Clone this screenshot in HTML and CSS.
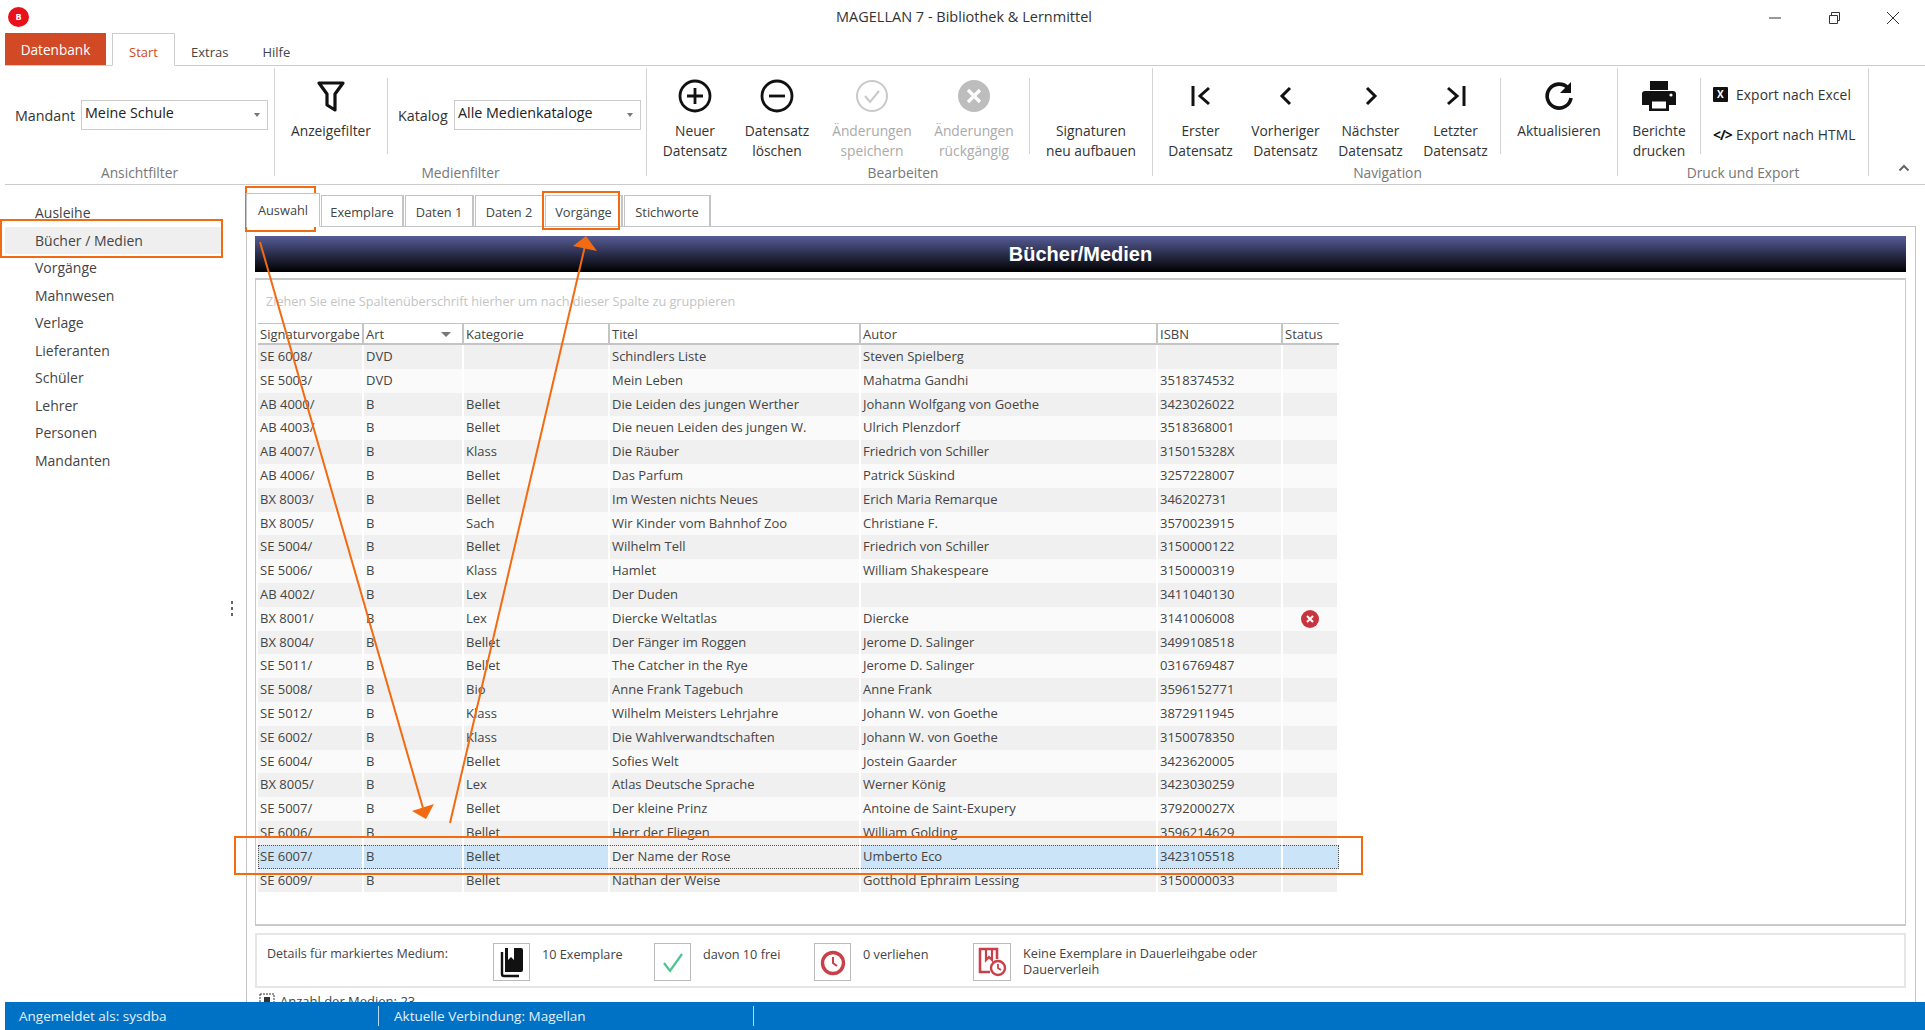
FILE: index.html
```html
<!DOCTYPE html>
<html lang="de">
<head>
  <meta charset="UTF-8" />
  <title>MAGELLAN 7 - Bibliothek &amp; Lernmittel</title>
  <link rel="stylesheet" href="styles.css">
</head>
<body>
<div class="window">
  <div class="titlebar">
    <div class="logo">B</div>
    <div class="title">MAGELLAN 7 - Bibliothek &amp; Lernmittel</div>
    <div class="winbtns">
      <svg width="14" height="14" viewBox="0 0 14 14"><path d="M1 7h12" stroke="#333" fill="none"/></svg>
      <svg width="14" height="14" viewBox="0 0 14 14"><path d="M2.5 4.5h8v8h-8zM4.5 4.5v-3h8v8h-2" stroke="#333" fill="none"/></svg>
      <svg width="14" height="14" viewBox="0 0 14 14"><path d="M1 1l12 12M13 1L1 13" stroke="#333" fill="none"/></svg>
    </div>
  </div>

  <div class="menubar">
    <div class="menu-db">Datenbank</div>
    <div class="menu-tab active">Start</div>
    <div class="menu-tab tab-extras">Extras</div>
    <div class="menu-tab tab-hilfe">Hilfe</div>
  </div>

  <div class="ribbon">
    <div class="group g-ansicht">
      <div class="group-body">
        <div class="field field-mandant">
          <span>Mandant</span>
          <div class="combo">Meine Schule<i class="caret"></i></div>
        </div>
      </div>
      <div class="group-label">Ansichtfilter</div>
    </div>

    <div class="group g-medien">
      <div class="group-body">
        <div class="rb-btn w-filter">
          <div class="rb-icon">
            <svg width="30" height="34" viewBox="0 0 30 34"><path d="M3 4h24l-8 11v16l-8-5V15z" fill="none" stroke="#111" stroke-width="3.2" stroke-linejoin="round"/></svg>
          </div>
          <div>Anzeigefilter</div>
        </div>
        <div class="vsep"></div>
        <div class="field field-katalog">
          <span>Katalog</span>
          <div class="combo">Alle Medienkataloge<i class="caret"></i></div>
        </div>
      </div>
      <div class="group-label">Medienfilter</div>
    </div>

    <div class="group g-bearbeiten">
      <div class="group-body">
        <div class="rb-btn w82">
          <div class="rb-icon">
            <svg width="34" height="34" viewBox="0 0 34 34"><circle cx="17" cy="17" r="15" fill="none" stroke="#111" stroke-width="2.8"/><path d="M17 9v16M9 17h16" stroke="#111" stroke-width="2.8"/></svg>
          </div>
          <div>Neuer<br>Datensatz</div>
        </div>
        <div class="rb-btn w82">
          <div class="rb-icon">
            <svg width="34" height="34" viewBox="0 0 34 34"><circle cx="17" cy="17" r="15" fill="none" stroke="#111" stroke-width="2.8"/><path d="M9 17h16" stroke="#111" stroke-width="2.8"/></svg>
          </div>
          <div>Datensatz<br>löschen</div>
        </div>
        <div class="rb-btn w108 disabled">
          <div class="rb-icon">
            <svg width="34" height="34" viewBox="0 0 34 34"><circle cx="17" cy="17" r="15" fill="none" stroke="#c9c9c9" stroke-width="2"/><path d="M10 17l5 6 9-11" fill="none" stroke="#c9c9c9" stroke-width="2"/></svg>
          </div>
          <div>Änderungen<br>speichern</div>
        </div>
        <div class="rb-btn w96 disabled">
          <div class="rb-icon">
            <svg width="34" height="34" viewBox="0 0 34 34"><circle cx="17" cy="17" r="16" fill="#bdbdbd"/><path d="M11 11l12 12M23 11L11 23" stroke="#fff" stroke-width="3.2"/></svg>
          </div>
          <div>Änderungen<br>rückgängig</div>
        </div>
        <div class="vsep sep-sig"></div>
        <div class="rb-btn w122">
          <div class="rb-icon"></div>
          <div>Signaturen<br>neu aufbauen</div>
        </div>
      </div>
      <div class="group-label">Bearbeiten</div>
    </div>

    <div class="group g-nav">
      <div class="group-body">
        <div class="rb-btn w85">
          <div class="rb-icon">
            <svg width="22" height="24" viewBox="0 0 22 24"><path d="M3 2v20" stroke="#111" stroke-width="3"/><path d="M19 4l-9 8 9 8" fill="none" stroke="#111" stroke-width="3"/></svg>
          </div>
          <div>Erster<br>Datensatz</div>
        </div>
        <div class="rb-btn w85">
          <div class="rb-icon">
            <svg width="14" height="24" viewBox="0 0 14 24"><path d="M11 4l-8 8 8 8" fill="none" stroke="#111" stroke-width="3"/></svg>
          </div>
          <div>Vorheriger<br>Datensatz</div>
        </div>
        <div class="rb-btn w85">
          <div class="rb-icon">
            <svg width="14" height="24" viewBox="0 0 14 24"><path d="M3 4l8 8-8 8" fill="none" stroke="#111" stroke-width="3"/></svg>
          </div>
          <div>Nächster<br>Datensatz</div>
        </div>
        <div class="rb-btn w85">
          <div class="rb-icon">
            <svg width="22" height="24" viewBox="0 0 22 24"><path d="M3 4l9 8-9 8" fill="none" stroke="#111" stroke-width="3"/><path d="M19 2v20" stroke="#111" stroke-width="3"/></svg>
          </div>
          <div>Letzter<br>Datensatz</div>
        </div>
        <div class="vsep sep-nav"></div>
        <div class="rb-btn w116">
          <div class="rb-icon">
            <svg width="32" height="34" viewBox="0 0 32 34"><path d="M25 9a12 12 0 1 0 3 10" fill="none" stroke="#111" stroke-width="3.6"/><path d="M28 3v11H17z" fill="#111"/></svg>
          </div>
          <div>Aktualisieren</div>
        </div>
      </div>
      <div class="group-label">Navigation</div>
    </div>

    <div class="group g-druck">
      <div class="group-body">
        <div class="rb-btn w82">
          <div class="rb-icon">
            <svg width="36" height="34" viewBox="0 0 36 34"><path d="M9 2h18v9H9zM4 12h28a3 3 0 0 1 3 3v11h-7v-6H8v6H1V15a3 3 0 0 1 3-3z" fill="#111"/><path d="M8 20h20v12H8z" fill="#111"/><path d="M11 22.500h14v7H11z" fill="#fff"/><circle cx="30" cy="16" r="1.600" fill="#fff"/></svg>
          </div>
          <div>Berichte<br>drucken</div>
        </div>
        <div class="vsep"></div>
        <div class="exports">
          <div class="export-row"><span class="xl-icon">X</span>Export nach Excel</div>
          <div class="export-row"><span class="code-icon">&lt;/&gt;</span>Export nach HTML</div>
        </div>
      </div>
      <div class="group-label">Druck und Export</div>
    </div>

    <div class="collapse">
      <svg width="12" height="8" viewBox="0 0 12 8"><path d="M1.500 6.500L6 2l4.500 4.500" fill="none" stroke="#666" stroke-width="2"/></svg>
    </div>
  </div>

  <div class="main">
    <div class="sidebar">
      <div class="nav-item">Ausleihe</div>
      <div class="nav-item current">Bücher / Medien</div>
      <div class="nav-item">Vorgänge</div>
      <div class="nav-item">Mahnwesen</div>
      <div class="nav-item">Verlage</div>
      <div class="nav-item">Lieferanten</div>
      <div class="nav-item">Schüler</div>
      <div class="nav-item">Lehrer</div>
      <div class="nav-item">Personen</div>
      <div class="nav-item">Mandanten</div>
      <div class="splitter"><i></i><i></i><i></i></div>
    </div>

    <div class="content">
      <div class="tabs">
        <div class="tab active">Auswahl</div>
        <div class="tab t-exemplare">Exemplare</div>
        <div class="tab t-daten">Daten 1</div>
        <div class="tab t-daten">Daten 2</div>
        <div class="tab t-vorgaenge">Vorgänge</div>
        <div class="tab t-stich">Stichworte</div>
      </div>
      <div class="panel">
        <div class="banner">Bücher/Medien</div>
        <div class="gridbox">
          <div class="group-hint">Ziehen Sie eine Spaltenüberschrift hierher um nach dieser Spalte zu gruppieren</div>
          <div class="row head">
            <span>Signaturvorgabe</span>
            <span class="sorted">Art<i class="sort"></i></span>
            <span>Kategorie</span>
            <span>Titel</span>
            <span>Autor</span>
            <span>ISBN</span>
            <span>Status</span>
          </div>
          <div class="row"><span>SE 6008/</span><span>DVD</span><span></span><span>Schindlers Liste</span><span>Steven Spielberg</span><span></span><span></span></div>
          <div class="row"><span>SE 5003/</span><span>DVD</span><span></span><span>Mein Leben</span><span>Mahatma Gandhi</span><span>3518374532</span><span></span></div>
          <div class="row"><span>AB 4000/</span><span>B</span><span>Bellet</span><span>Die Leiden des jungen Werther</span><span>Johann Wolfgang von Goethe</span><span>3423026022</span><span></span></div>
          <div class="row"><span>AB 4003/</span><span>B</span><span>Bellet</span><span>Die neuen Leiden des jungen W.</span><span>Ulrich Plenzdorf</span><span>3518368001</span><span></span></div>
          <div class="row"><span>AB 4007/</span><span>B</span><span>Klass</span><span>Die Räuber</span><span>Friedrich von Schiller</span><span>315015328X</span><span></span></div>
          <div class="row"><span>AB 4006/</span><span>B</span><span>Bellet</span><span>Das Parfum</span><span>Patrick Süskind</span><span>3257228007</span><span></span></div>
          <div class="row"><span>BX 8003/</span><span>B</span><span>Bellet</span><span>Im Westen nichts Neues</span><span>Erich Maria Remarque</span><span>346202731</span><span></span></div>
          <div class="row"><span>BX 8005/</span><span>B</span><span>Sach</span><span>Wir Kinder vom Bahnhof Zoo</span><span>Christiane F.</span><span>3570023915</span><span></span></div>
          <div class="row"><span>SE 5004/</span><span>B</span><span>Bellet</span><span>Wilhelm Tell</span><span>Friedrich von Schiller</span><span>3150000122</span><span></span></div>
          <div class="row"><span>SE 5006/</span><span>B</span><span>Klass</span><span>Hamlet</span><span>William Shakespeare</span><span>3150000319</span><span></span></div>
          <div class="row"><span>AB 4002/</span><span>B</span><span>Lex</span><span>Der Duden</span><span></span><span>3411040130</span><span></span></div>
          <div class="row"><span>BX 8001/</span><span>B</span><span>Lex</span><span>Diercke Weltatlas</span><span>Diercke</span><span>3141006008</span><span class="status"><svg width="18" height="18" viewBox="0 0 18 18"><circle cx="9" cy="9" r="9" fill="#c9353f"/><path d="M6 6l6 6M12 6l-6 6" stroke="#fff" stroke-width="2"/></svg></span></div>
          <div class="row"><span>BX 8004/</span><span>B</span><span>Bellet</span><span>Der Fänger im Roggen</span><span>Jerome D. Salinger</span><span>3499108518</span><span></span></div>
          <div class="row"><span>SE 5011/</span><span>B</span><span>Bellet</span><span>The Catcher in the Rye</span><span>Jerome D. Salinger</span><span>0316769487</span><span></span></div>
          <div class="row"><span>SE 5008/</span><span>B</span><span>Bio</span><span>Anne Frank Tagebuch</span><span>Anne Frank</span><span>3596152771</span><span></span></div>
          <div class="row"><span>SE 5012/</span><span>B</span><span>Klass</span><span>Wilhelm Meisters Lehrjahre</span><span>Johann W. von Goethe</span><span>3872911945</span><span></span></div>
          <div class="row"><span>SE 6002/</span><span>B</span><span>Klass</span><span>Die Wahlverwandtschaften</span><span>Johann W. von Goethe</span><span>3150078350</span><span></span></div>
          <div class="row"><span>SE 6004/</span><span>B</span><span>Bellet</span><span>Sofies Welt</span><span>Jostein Gaarder</span><span>3423620005</span><span></span></div>
          <div class="row"><span>BX 8005/</span><span>B</span><span>Lex</span><span>Atlas Deutsche Sprache</span><span>Werner König</span><span>3423030259</span><span></span></div>
          <div class="row"><span>SE 5007/</span><span>B</span><span>Bellet</span><span>Der kleine Prinz</span><span>Antoine de Saint-Exupery</span><span>379200027X</span><span></span></div>
          <div class="row"><span>SE 6006/</span><span>B</span><span>Bellet</span><span>Herr der Fliegen</span><span>William Golding</span><span>3596214629</span><span></span></div>
          <div class="row selected"><span>SE 6007/</span><span>B</span><span>Bellet</span><span class="plain">Der Name der Rose</span><span>Umberto Eco</span><span>3423105518</span><span></span></div>
          <div class="row"><span>SE 6009/</span><span>B</span><span>Bellet</span><span>Nathan der Weise</span><span>Gotthold Ephraim Lessing</span><span>3150000033</span><span></span></div>
        </div>

        <div class="details">
          <div class="details-title">Details für markiertes Medium:</div>
          <div class="detail d-1">
            <div class="detail-icon">
              <svg width="26" height="32" viewBox="0 0 26 32"><path d="M6 2h3v12l3-3 3 3V2h7a2 2 0 0 1 2 2v20a2 2 0 0 1-2 2H6z" fill="#111"/><path d="M3 6v22a2 2 0 0 0 2 2h15" fill="none" stroke="#111" stroke-width="2.400"/></svg>
            </div>
            <div class="detail-text">10 Exemplare</div>
          </div>
          <div class="detail d-2">
            <div class="detail-icon">
              <svg width="24" height="24" viewBox="0 0 24 24"><path d="M3 13l6 8L21 4" fill="none" stroke="#4cc393" stroke-width="2.200"/></svg>
            </div>
            <div class="detail-text">davon 10 frei</div>
          </div>
          <div class="detail d-3">
            <div class="detail-icon">
              <svg width="28" height="28" viewBox="0 0 28 28"><circle cx="14" cy="15" r="10.500" fill="none" stroke="#c9404a" stroke-width="3.400"/><path d="M14 9v6l4 3" fill="none" stroke="#c9404a" stroke-width="2"/></svg>
            </div>
            <div class="detail-text">0 verliehen</div>
          </div>
          <div class="detail d-4">
            <div class="detail-icon">
              <svg width="30" height="32" viewBox="0 0 30 32"><path d="M13 26H3V3h17v10" fill="none" stroke="#c9404a" stroke-width="2.600"/><path d="M9 3v11l3-3 3 3V3" fill="none" stroke="#c9404a" stroke-width="2.200"/><circle cx="21" cy="22" r="7" fill="#fff" stroke="#c9404a" stroke-width="2.400"/><path d="M21 18v4l3 2" fill="none" stroke="#c9404a" stroke-width="1.800"/></svg>
            </div>
            <div class="detail-text wide">Keine Exemplare in Dauerleihgabe oder Dauerverleih</div>
          </div>
        </div>
        <div class="count">
          <svg width="16" height="16" viewBox="0 0 16 16"><path d="M1 1h14v14H1z" fill="none" stroke="#333" stroke-dasharray="2 1"/><path d="M5 4h6v8H5z" fill="#333"/></svg>
          Anzahl der Medien: 23
        </div>
      </div>
    </div>
  </div>

  <div class="statusbar">
    <div class="status-cell s-user">Angemeldet als: sysdba</div>
    <div class="status-cell s-conn">Aktuelle Verbindung: Magellan</div>
  </div>
</div>

<!-- screenshot annotations, drawn over the window -->
<div class="mark mark-nav"></div>
<div class="mark mark-tab1"></div>
<div class="mark mark-tab2"></div>
<div class="mark mark-row"></div>
<svg class="arrows" width="1925" height="1030" viewBox="0 0 1925 1030">
  <path d="M260 242L423 808" stroke="#f26a12" stroke-width="2" fill="none"/>
  <path d="M412 811L434 804L426 819z" fill="#f26a12"/>
  <path d="M450 823L585 246" stroke="#f26a12" stroke-width="2" fill="none"/>
  <path d="M573 246L597 251L586 236z" fill="#f26a12"/>
</svg>
</body>
</html>
```

FILE: styles.css
```css
* {
  box-sizing: border-box;
}
html, body {
  margin: 0;
  height: 100%;
  overflow: hidden;
  background: #fff;
}
body {
  position: relative;
  font-family: "Open Sans", sans-serif;
  font-size: 13px;
  color: #444;
}
.window {
  height: 1030px;
  padding-left: 5px;
  display: flex;
  flex-direction: column;
}

/* title bar */
.titlebar {
  height: 33px;
  flex: none;
  display: flex;
  align-items: center;
  position: relative;
}
.logo {
  width: 21px;
  height: 20px;
  margin-left: 3px;
  margin-top: 1px;
  border-radius: 50%;
  background: #e8101a;
  color: #fff;
  font-size: 9px;
  font-weight: 700;
  line-height: 20px;
  text-align: center;
}
.title {
  flex: 1;
  text-align: center;
  margin-right: 26px;
  color: #333;
  font-size: 14.5px;
}
.winbtns {
  position: absolute;
  right: 25px;
  top: 11px;
  display: flex;
  gap: 45px;
}

/* menu row */
.menubar {
  height: 33px;
  flex: none;
  display: flex;
  border-bottom: 1px solid #ccc;
}
.menu-db {
  width: 101px;
  background: #d14a25;
  color: #fff;
  text-align: center;
  font-size: 13.6px;
  line-height: 33px;
}
.menu-tab {
  line-height: 38px;
  height: 33px;
  color: #444;
}
.menu-tab.active {
  width: 63px;
  margin-left: 6px;
  background: #fff;
  height: 33px;
  border: 1px solid #ccc;
  border-bottom: 1px solid #fff;
  color: #d14a25;
  text-align: center;
  line-height: 36px;
}
.tab-extras {
  margin-left: 16px;
}
.tab-hilfe {
  margin-left: 34px;
}

/* ribbon */
.ribbon {
  height: 119px;
  flex: none;
  display: flex;
  padding: 2px 0 8px;
  border-bottom: 1px solid #ccc;
  font-size: 13.8px;
}
.group {
  display: flex;
  flex-direction: column;
  flex: none;
  border-right: 1px solid #d4d4d4;
}
.g-ansicht { width: 270px; }
.g-medien { width: 372px; }
.g-bearbeiten { width: 506px; padding-left: 7px; }
.g-nav { width: 465px; padding-left: 5px; }
.g-druck { width: 251px; }
.group-body {
  flex: 1;
  display: flex;
  padding-top: 10px;
  min-height: 0;
}
.group-label {
  height: 12px;
  color: #777;
  text-align: center;
  line-height: 18px;
}
.rb-btn {
  flex: none;
  text-align: center;
  line-height: 19.5px;
  color: #333;
}
.rb-icon {
  height: 36px;
  margin-bottom: 7px;
  display: flex;
  align-items: center;
  justify-content: center;
}
.disabled { color: #aaa; }
.w82 { width: 82px; }
.w85 { width: 85px; }
.w96 { width: 96px; }
.w108 { width: 108px; }
.w116 { width: 116px; }
.w122 { width: 122px; }
.w-filter { width: 112px; }
.vsep {
  flex: none;
  width: 1px;
  height: 76px;
  background: #d4d4d4;
}
.sep-sig { margin-left: 7px; }
.sep-nav { margin-left: 2px; }
.field {
  display: flex;
  align-items: center;
  height: 30px;
  margin-top: 22px;
  color: #333;
  font-size: 14.3px;
}
.field-mandant { padding-left: 10px; }
.field-mandant span { width: 66px; }
.field-katalog { padding-left: 10px; }
.field-katalog span { width: 56px; }
.combo {
  position: relative;
  width: 187px;
  height: 30px;
  border: 1px solid #ccc;
  padding-left: 3px;
  line-height: 23px;
  color: #222;
}
.caret {
  position: absolute;
  right: 7px;
  top: 12px;
  border: 3px solid transparent;
  border-top: 4px solid #777;
  border-bottom: 0;
}
.exports {
  padding: 4px 0 0 12px;
  color: #333;
}
.export-row {
  display: flex;
  align-items: center;
  height: 24px;
  margin-bottom: 16px;
  letter-spacing: 0.1px;
}
.xl-icon {
  width: 15px;
  height: 15px;
  margin-right: 8px;
  background: #111;
  color: #fff;
  font-size: 10px;
  font-weight: 700;
  line-height: 15px;
  text-align: center;
  border-radius: 1px;
}
.code-icon {
  width: 15px;
  margin-right: 8px;
  color: #111;
  font-size: 14px;
  font-weight: 700;
  letter-spacing: -1px;
  white-space: nowrap;
}
.collapse {
  flex: 1;
  display: flex;
  align-items: flex-end;
  padding: 0 0 4px 29px;
}

/* main area */
.main {
  flex: 1;
  min-height: 0;
  display: flex;
}
.sidebar {
  position: relative;
  flex: none;
  width: 241px;
  padding-top: 14px;
}
.nav-item {
  width: 217px;
  height: 27.5px;
  padding-left: 30px;
  line-height: 27px;
  font-size: 14px;
  color: #444;
}
.nav-item.current {
  background: #efefef;
}
.splitter {
  position: absolute;
  left: 226px;
  top: 416px;
  display: flex;
  flex-direction: column;
  gap: 3px;
}
.splitter i {
  width: 2px;
  height: 3px;
  background: #666;
}
.content {
  flex: 1;
  min-width: 0;
  display: flex;
  flex-direction: column;
  padding-top: 9px;
}
.tabs {
  display: flex;
  align-items: flex-end;
  height: 33px;
  flex: none;
  position: relative;
  margin-bottom: -1px;
}
.tab {
  height: 32px;
  border: 1px solid #c4c4c4;
  border-right-width: 2px;
  color: #444;
  text-align: center;
  line-height: 33px;
  margin-right: 1px;
  font-size: 12.8px;
}
.tab.active {
  width: 74px;
  height: 34px;
  border-bottom-color: #fff;
  border-right-width: 1px;
  background: #fff;
  position: relative;
  z-index: 1;
}
.t-exemplare { width: 83px; }
.t-daten { width: 69px; }
.t-vorgaenge { width: 78px; }
.t-stich { width: 87px; }
.panel {
  flex: 1;
  min-height: 0;
  margin-right: 9px;
  padding: 9px 9px 0 8px;
  border: 1px solid #c4c4c4;
  border-bottom: 0;
  overflow: hidden;
}
.banner {
  height: 36px;
  background: linear-gradient(#565c96, #000);
  color: #fff;
  font-family: "Liberation Sans", sans-serif;
  font-size: 20px;
  font-weight: 700;
  text-align: center;
  line-height: 36px;
}
.gridbox {
  height: 648px;
  margin-top: 6px;
  border: 1px solid #c9c9c9;
  border-width: 2px 1px 2px 1px;
}
.group-hint {
  height: 43px;
  padding-left: 10px;
  line-height: 43px;
  color: #c4c4c4;
  font-size: 12.7px;
}
.row {
  display: grid;
  grid-template-columns: 106px 100px 146px 251px 297px 125px 56px;
  height: 23.8px;
  margin-left: 2px;
  width: 1081px;
}
.row:nth-child(odd) span { background: #f0f0f0; }
.row span {
  background: #fafafa;
  border-right: 2px solid #fff;
  padding-left: 2px;
  line-height: 23px;
  white-space: nowrap;
  overflow: hidden;
}
.row.head {
  height: 22px;
  border: 1px solid #c4c4c4;
  border-width: 0 2px 2px 0;
  border-top: 1px solid #c4c4c4;
}
.row.head span {
  background: #fff;
  border-right: 2px solid #c4c4c4;
  padding-left: 2px;
  line-height: 20px;
}
.row.head span:last-child { border-right: 0; }
.sorted { position: relative; }
.sort {
  position: absolute;
  right: 11px;
  top: 8px;
  border: 5px solid transparent;
  border-top: 5px solid #777;
  border-bottom: 0;
}
.row .status {
  display: flex;
  align-items: center;
  justify-content: center;
  padding-left: 0;
}
.row.selected span {
  background: #cce4f7;
  border-top: 1px dotted #555;
  border-bottom: 1px dotted #555;
  line-height: 21px;
}
.row.selected span:last-child { border-right: 1px dotted #555; }
.row.selected span:first-child { border-left: 1px dotted #555; padding-left: 1px; }
.row.selected span.plain { background: #f0f0f0; }

/* details box under the grid */
.details {
  position: relative;
  display: flex;
  height: 55px;
  margin-top: 7px;
  border: 2px solid #e6e6e6;
  padding: 8px 0 0 10px;
  font-size: 12.7px;
}
.details-title {
  width: 226px;
  padding-top: 2px;
  font-size: 12.5px;
}
.detail {
  display: flex;
  flex: none;
}
.d-1 { width: 161px; }
.d-2 { width: 160px; }
.d-3 { width: 159px; }
.detail-icon {
  width: 37px;
  height: 38px;
  border: 1px solid #bbb;
  display: flex;
  align-items: center;
  justify-content: center;
}
.d-4 .detail-icon { width: 38px; }
.detail-text {
  margin-left: 12px;
  padding-top: 2px;
}
.detail-text.wide {
  width: 265px;
  line-height: 16px;
}
.count {
  display: flex;
  align-items: center;
  gap: 5px;
  margin: 5px 0 0 4px;
  height: 16px;
}

/* status bar */
.statusbar {
  height: 28px;
  flex: none;
  display: flex;
  align-items: center;
  background: #0072c6;
  color: #e6f0fa;
  position: relative;
}
.status-cell {
  height: 20px;
  line-height: 20px;
  font-size: 13.5px;
}
.s-user {
  width: 374px;
  padding-left: 14px;
  border-right: 1px solid #bcd8f0;
}
.s-conn {
  width: 375px;
  padding-left: 15px;
  border-right: 1px solid #bcd8f0;
}

/* orange annotations */
.mark {
  position: absolute;
  border: 2px solid #f26a12;
}
.mark-nav { left: 0; top: 219px; width: 223px; height: 39px; }
.mark-tab1 { left: 245px; top: 186px; width: 71px; height: 46px; }
.mark-tab2 { left: 542px; top: 191px; width: 78px; height: 39px; }
.mark-row { left: 234px; top: 836px; width: 1129px; height: 39px; }
.arrows {
  position: absolute;
  left: 0;
  top: 0;
  pointer-events: none;
}
```
